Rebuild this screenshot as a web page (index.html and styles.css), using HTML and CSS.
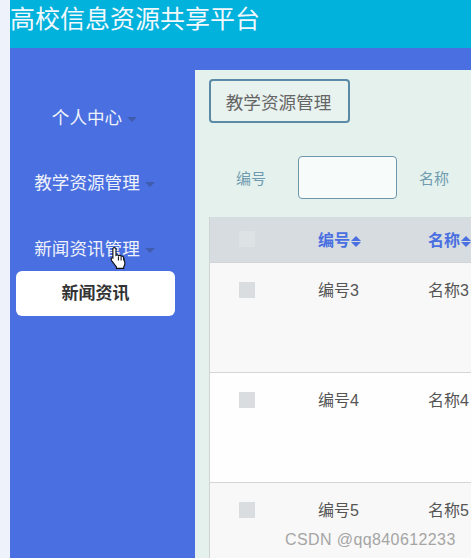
FILE: index.html
```html
<!DOCTYPE html>
<html>
<head>
    <title>高校信息资源共享平台</title>
    <meta charset="UTF-8">
    <link rel="stylesheet" href="styles.css">
</head>
<body>
    <div class="app">
        <div class="header">高校信息资源共享平台</div>
        <div class="layout">
            <div class="sidebar">
                <div class="menu-title">个人中心<span class="caret"></span></div>
                <div class="menu-title">教学资源管理<span class="caret"></span></div>
                <div class="menu-title">新闻资讯管理<span class="caret"></span></div>
                <div class="submenu">新闻资讯</div>
                <svg class="cursor" width="17" height="24" viewBox="0 0 16 23">
                    <path d="M4 1.500c1 0 1.600.7 1.600 1.700V9c.8-.6 2-.5 2.500.3.800-.5 1.900-.3 2.400.5.900-.4 1.900 0 2.200.9l1.300 5c.3 1.500-.1 3-1 4.300v1.500H6v-1.500L1.400 14c-.7-1-.5-2 .2-2.400.6-.4 1.300-.2 1 .4V3.200C2.400 2.200 3 1.500 4 1.500z" fill="#fff" stroke="#111" stroke-width="1.100"/>
                    <path d="M7.900 10v4M10.500 10.500V14M13 11v3" stroke="#111" stroke-width="1" fill="none"/>
                </svg>
            </div>
            <div class="main">
                <button class="crumb">教学资源管理</button>
                <div class="search">
                    <span class="search-label">编号</span>
                    <input class="search-input" type="text">
                    <span class="search-label">名称</span>
                </div>
                <div class="table">
                    <div class="row head">
                        <div class="cell-check"><span class="check"></span></div>
                        <div class="cell-no">编号<span class="sort"></span></div>
                        <div class="cell-name">名称<span class="sort"></span></div>
                    </div>
                    <div class="row">
                        <div class="cell-check"><span class="check"></span></div>
                        <div class="cell-no">编号3</div>
                        <div class="cell-name">名称3</div>
                    </div>
                    <div class="row">
                        <div class="cell-check"><span class="check"></span></div>
                        <div class="cell-no">编号4</div>
                        <div class="cell-name">名称4</div>
                    </div>
                    <div class="row">
                        <div class="cell-check"><span class="check"></span></div>
                        <div class="cell-no">编号5</div>
                        <div class="cell-name">名称5</div>
                    </div>
                </div>
            </div>
        </div>
    </div>
    <div class="watermark">CSDN @qq840612233</div>
</body>
</html>
```

FILE: styles.css
```css
html, body {
    margin: 0;
    height: 100%;
    overflow: hidden;
}
body {
    background-color: #eef3fb;
    font-family: "Liberation Sans", "Noto Sans CJK SC", sans-serif;
    font-size: 16px;
    padding-left: 10px;
    box-sizing: border-box;
}
.app {
    height: 558px;
    display: flex;
    flex-direction: column;
}
.header {
    height: 48px;
    flex-shrink: 0;
    background-color: #00b2dc;
    color: #f2f8fc;
    font-size: 25px;
    line-height: 38px;
}
.layout {
    flex: 1;
    display: flex;
    min-height: 0;
    background-color: #4a6fe0;
}
.sidebar {
    position: relative;
    width: 185px;
    flex-shrink: 0;
    padding-top: 37px;
    box-sizing: border-box;
}
.menu-title {
    height: 66px;
    line-height: 66px;
    text-align: center;
    font-size: 17.600px;
    color: #eef2fb;
    padding-right: 16px;
}
.menu-title:nth-child(1) {
    height: 65px;
}
.menu-title:nth-child(3) {
    height: 55px;
}
.caret {
    display: inline-block;
    margin-left: 5px;
    vertical-align: 2px;
    border-top: 5px solid #3f5cae;
    border-left: 5px solid transparent;
    border-right: 5px solid transparent;
}
.submenu {
    width: 159px;
    height: 45px;
    margin-left: 6px;
    background-color: #fff;
    border-radius: 6px;
    text-align: center;
    line-height: 45px;
    font-size: 17px;
    font-weight: bold;
    color: #333;
}
.cursor {
    position: absolute;
    left: 100px;
    top: 198px;
}
.main {
    flex: 1;
    min-width: 0;
    margin-top: 22px;
    background-color: #e4f1ec;
    padding: 9px 0 0 14px;
    overflow: hidden;
}
.crumb {
    display: block;
    width: 141px;
    height: 44px;
    padding: 0 2px 0 0;
    background-color: #e8f2ef;
    border: 2px solid #5a8aa6;
    border-radius: 4px;
    font-family: inherit;
    font-size: 17.600px;
    color: #666;
}
.search {
    display: flex;
    align-items: center;
    height: 43px;
    margin-top: 33px;
}
.search-label {
    font-size: 15px;
    color: #6f9bb0;
    margin-left: 27px;
}
.search-input {
    width: 99px;
    height: 43px;
    margin-left: 32px;
    margin-right: -5px;
    padding: 0;
    box-sizing: border-box;
    background-color: #f7fbfa;
    border: 1px solid #6f97ac;
    border-radius: 4px;
}
.table {
    width: 290px;
    margin-top: 18px;
    background-color: #fff;
    border-left: 1px solid #cfd3d3;
}
.row {
    display: flex;
    height: 95px;
    border-bottom: 1px solid #d4d6d6;
    font-size: 16px;
    color: #555;
    background-color: #fefefe;
    padding-top: 14px;
}
.row:nth-child(even) {
    background-color: #f8f8f8;
}
.row.head {
    height: 43px;
    padding-top: 0;
    padding-bottom: 2px;
    align-items: center;
    background-color: #d6dce0;
    color: #4a6fe0;
    font-weight: bold;
    border-bottom: 1px solid #d0d4d6;
}
.cell-check {
    width: 108px;
    padding-left: 29px;
    box-sizing: border-box;
}
.cell-no {
    width: 110px;
}
.cell-name {
    flex: 1;
}
.check {
    display: block;
    width: 16px;
    height: 16px;
    margin-top: 5px;
    background-color: #dadde0;
}
.head .check {
    margin-top: 0;
    background-color: #dde2e4;
}
.sort {
    display: inline-block;
    position: relative;
    width: 10px;
    height: 11px;
    margin-left: 1px;
    vertical-align: -1px;
}
.sort::before, .sort::after {
    content: "";
    position: absolute;
    left: 0;
    border-left: 5px solid transparent;
    border-right: 5px solid transparent;
}
.sort::before {
    top: 0;
    border-bottom: 5px solid #4a6fe0;
}
.sort::after {
    bottom: 0;
    border-top: 5px solid #4a6fe0;
}
.watermark {
    position: absolute;
    left: 285px;
    top: 531px;
    font-size: 16px;
    letter-spacing: 0.400px;
    color: #a5a5a5;
}
```
